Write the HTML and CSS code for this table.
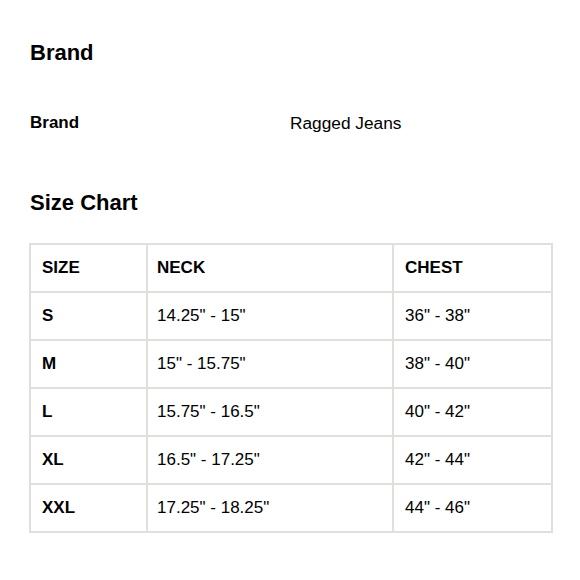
FILE: index.html
```html
<!DOCTYPE html>
<html>
<head>
<meta charset="utf-8">
<link rel="stylesheet" href="styles.css">
</head>
<body>
<main class="page">
  <h2 class="section-title">Brand</h2>
  <div class="attr-row">
    <div class="attr-label">Brand</div>
    <div class="attr-value">Ragged Jeans</div>
  </div>
  <h2 class="section-title chart-title">Size Chart</h2>
  <table class="size-table">
    <colgroup>
      <col class="col-size">
      <col class="col-neck">
      <col class="col-chest">
    </colgroup>
    <thead>
      <tr><th>SIZE</th><th class="neck">NECK</th><th>CHEST</th></tr>
    </thead>
    <tbody>
      <tr><th>S</th><td class="neck">14.25" - 15"</td><td>36" - 38"</td></tr>
      <tr><th>M</th><td class="neck">15" - 15.75"</td><td>38" - 40"</td></tr>
      <tr><th>L</th><td class="neck">15.75" - 16.5"</td><td>40" - 42"</td></tr>
      <tr><th>XL</th><td class="neck">16.5" - 17.25"</td><td>42" - 44"</td></tr>
      <tr><th>XXL</th><td class="neck">17.25" - 18.25"</td><td>44" - 46"</td></tr>
    </tbody>
  </table>
</main>
</body>
</html>
```
FILE: styles.css
```css
html, body {
  margin: 0;
  padding: 0;
  background: #fff;
}
body {
  font-family: "Liberation Sans", Arial, Helvetica, sans-serif;
  color: #000;
}
.page {
  padding: 40px 30px 0 30px;
}
.section-title {
  margin: 0;
  font-size: 22px;
  line-height: 26px;
  font-weight: bold;
}
.attr-row {
  display: grid;
  grid-template-columns: 260px 1fr;
  margin-top: 47px;
  font-size: 17px;
  line-height: 20px;
}
.attr-label {
  font-weight: bold;
}
.attr-value {
  font-size: 17.3px;
}
.chart-title {
  margin-top: 57px;
}
.size-table {
  margin-top: 27px;
  margin-left: -1px;
  width: 522px;
  border-collapse: collapse;
  table-layout: fixed;
  font-size: 17px;
  line-height: 20px;
}
.col-size { width: 117px; }
.col-neck { width: 246px; }
.col-chest { width: 159px; }
.size-table th,
.size-table td {
  border: 2px solid #e0dfdc;
  height: 48px;
  padding: 0 0 0 11px;
  text-align: left;
  vertical-align: middle;
  box-sizing: border-box;
}
.size-table .neck {
  padding-left: 9px;
}
.size-table th {
  font-weight: bold;
}
.size-table td {
  font-weight: normal;
}
```
